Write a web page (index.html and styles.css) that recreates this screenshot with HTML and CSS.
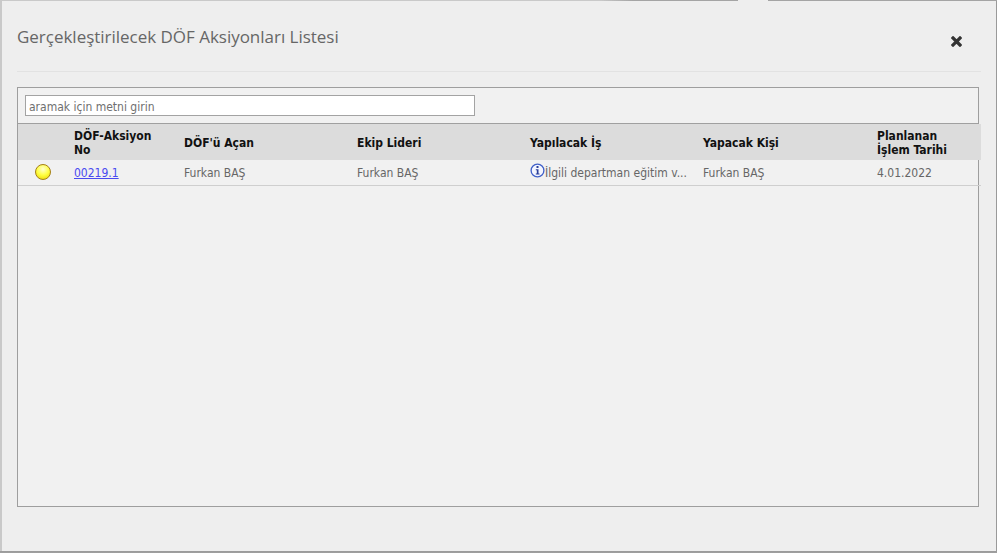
FILE: index.html
```html
<!DOCTYPE html>
<html lang="tr">
<head>
<meta charset="utf-8">
<title>Gerçekleştirilecek DÖF Aksiyonları Listesi</title>
<link rel="stylesheet" href="styles.css">
</head>
<body>
<div class="modal">
  <header class="modal-header">
    <h1 class="modal-title">Gerçekleştirilecek DÖF Aksiyonları Listesi</h1>
    <button class="close" type="button" aria-label="Kapat">
      <svg width="11" height="11" viewBox="0 0 11 11"><path d="M2 2 L9 9 M9 2 L2 9" stroke="#333" stroke-width="3.2" stroke-linecap="square" fill="none"/></svg>
    </button>
  </header>
  <section class="panel">
    <div class="search-bar">
      <input class="search" type="text" value="aramak için metni girin">
    </div>
    <table class="grid">
      <colgroup>
        <col class="c-icon"><col class="c-no"><col class="c-std"><col class="c-std"><col class="c-std"><col class="c-std"><col class="c-last">
      </colgroup>
      <thead>
        <tr>
          <th></th>
          <th>DÖF-Aksiyon No</th>
          <th>DÖF'ü Açan</th>
          <th>Ekip Lideri</th>
          <th>Yapılacak İş</th>
          <th>Yapacak Kişi</th>
          <th class="last">Planlanan İşlem Tarihi</th>
        </tr>
      </thead>
      <tbody>
        <tr>
          <td class="status"><span class="dot"></span></td>
          <td><a href="#">00219.1</a></td>
          <td>Furkan BAŞ</td>
          <td>Furkan BAŞ</td>
          <td class="work"><svg class="info" width="15" height="15" viewBox="0 0 15 15"><circle cx="7.5" cy="7.5" r="6.4" fill="#f4f6ff" stroke="#3f5fc8" stroke-width="1.3"/><rect x="6.5" y="3" width="2" height="2" fill="#2a3f9a"/><path d="M5.8 6.2h2.7v4.4h1v1H5.8v-1h1V7.2h-1z" fill="#2a3f9a"/></svg><span class="work-text">İlgili departman eğitim v...</span></td>
          <td>Furkan BAŞ</td>
          <td class="last">4.01.2022</td>
        </tr>
      </tbody>
    </table>
  </section>
</div>
</body>
</html>
```
FILE: styles.css
```css
* { box-sizing: border-box; }
html, body { margin: 0; height: 100%; }
body {
  background:
    linear-gradient(90deg, #c9c9c9 0, #c9c9c9 600px, #a4a4a4 633px, #a4a4a4 738px, #eeeeee 738px, #eeeeee 768px, #a4a4a4 768px, #a4a4a4 100%) 0 0 / 100% 1px no-repeat,
    linear-gradient(0deg, #a0a0a0, #9a9a9a) 0 551px / 100% 2px no-repeat,
    linear-gradient(90deg, #c9c9c9, #c9c9c9 2px, #9a9a9a 996px);
  height: 553px;
  overflow: hidden;
  font-family: "DejaVu Sans Condensed", "DejaVu Sans", sans-serif;
  font-size: 12px;
  color: #666;
}
.modal {
  margin: 0 0 0 2px;
  position: relative;
  top: 1px;
  width: 994px;
  height: 550px;
  background: #eeeeee;
  padding: 0 15px;
  display: flex;
  flex-direction: column;
}
.modal-header {
  height: 71px;
  border-bottom: 1px solid #e2e2e2;
  display: flex;
  justify-content: space-between;
  flex: none;
}
.modal-title {
  margin: 25px 0 0;
  font-family: "Open Sans", sans-serif;
  font-weight: 400;
  font-size: 17px;
  line-height: 22px;
  letter-spacing: -0.02px;
  color: #666;
}
.close {
  border: 0;
  background: none;
  padding: 0;
  margin: 34px 19px 0 0;
  width: 11px;
  height: 13px;
}
.panel {
  margin-top: 15px;
  width: 962px;
  height: 420px;
  background: #f1f1f1;
  border: 1px solid #9e9e9e;
  flex: none;
}
.search-bar {
  height: 36px;
  padding: 7px 0 0 7px;
  border-bottom: 1px solid #a0a0a0;
}
.search {
  display: block;
  width: 450px;
  height: 21px;
  border: 1px solid #a3a3a3;
  background: #fff;
  padding: 2px 3px 0;
  font: inherit;
  color: #6f6f6f;
  outline: 0;
}
.grid {
  border-collapse: collapse;
  table-layout: fixed;
  width: 963px;
}
.c-icon { width: 48px; }
.c-no { width: 110px; }
.c-std { width: 173px; }
.c-last { width: 113px; }
.grid th {
  background: #dcdcdc;
  height: 36px;
  padding: 1px 8px 0;
  text-align: left;
  font-weight: 700;
  font-size: 12px;
  line-height: 14px;
  color: #111;
}
.grid th.last { padding: 1px 24px 0 9px; }
.grid td {
  height: 25px;
  padding: 1px 8px 0;
  border-bottom: 1px solid #cfcfcf;
  color: #666;
  white-space: nowrap;
}
.grid td.last { padding-left: 9px; }
.grid td.status { padding: 0 8px 0 17px; }
.dot {
  display: block;
  width: 16px;
  height: 16px;
  border-radius: 50%;
  border: 1px solid #a5801a;
  background: radial-gradient(circle at 50% 30%, #ffffd0 0, #ffff40 50%, #e6d000 100%);
}
.grid a { color: #4a4af0; }
.work .info { vertical-align: middle; position: relative; top: -2px; }
.work-text { vertical-align: -1px; }
```
